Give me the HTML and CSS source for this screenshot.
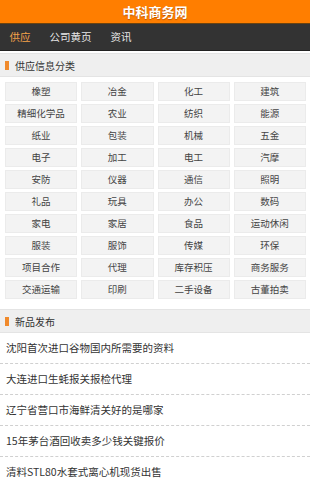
FILE: index.html
```html
<!DOCTYPE html>
<html lang="zh-CN">
<head>
<meta charset="utf-8">
<title>中科商务网</title>
<link rel="stylesheet" href="styles.css">
</head>
<body>
<header class="top">中科商务网</header>
<nav class="nav">
  <a class="nav-item active">供应</a>
  <a class="nav-item">公司黄页</a>
  <a class="nav-item">资讯</a>
</nav>
<section>
  <h2 class="sec-title"><span class="mark"></span>供应信息分类</h2>
  <div class="grid">
    <a class="cell">橡塑</a><a class="cell">冶金</a><a class="cell">化工</a><a class="cell">建筑</a>
    <a class="cell">精细化学品</a><a class="cell">农业</a><a class="cell">纺织</a><a class="cell">能源</a>
    <a class="cell">纸业</a><a class="cell">包装</a><a class="cell">机械</a><a class="cell">五金</a>
    <a class="cell">电子</a><a class="cell">加工</a><a class="cell">电工</a><a class="cell">汽摩</a>
    <a class="cell">安防</a><a class="cell">仪器</a><a class="cell">通信</a><a class="cell">照明</a>
    <a class="cell">礼品</a><a class="cell">玩具</a><a class="cell">办公</a><a class="cell">数码</a>
    <a class="cell">家电</a><a class="cell">家居</a><a class="cell">食品</a><a class="cell">运动休闲</a>
    <a class="cell">服装</a><a class="cell">服饰</a><a class="cell">传媒</a><a class="cell">环保</a>
    <a class="cell">项目合作</a><a class="cell">代理</a><a class="cell">库存积压</a><a class="cell">商务服务</a>
    <a class="cell">交通运输</a><a class="cell">印刷</a><a class="cell">二手设备</a><a class="cell">古董拍卖</a>
  </div>
</section>
<section>
  <h2 class="sec-title sec-news"><span class="mark"></span>新品发布</h2>
  <ul class="news">
    <li>沈阳首次进口谷物国内所需要的资料</li>
    <li>大连进口生蚝报关报检代理</li>
    <li>辽宁省营口市海鲜清关好的是哪家</li>
    <li>15年茅台酒回收卖多少钱关键报价</li>
    <li>清料STL80水套式离心机现货出售</li>
  </ul>
</section>
</body>
</html>
```
FILE: styles.css
```css
html, body {
  margin: 0;
  padding: 0;
  background: #fff;
  font-family: "Noto Sans CJK SC", "Noto Sans", sans-serif;
  color: #333;
}
.top {
  height: 23px;
  line-height: 23px;
  background: #ff7e00;
  color: #fff;
  text-align: center;
  font-weight: bold;
  font-size: 13px;
  text-shadow: 0 1px 1px rgba(120, 50, 0, 0.5);
  border-bottom: 1px solid #6a4310;
}
.nav {
  display: flex;
  height: 26px;
  background: #333;
  border-bottom: 1px solid #222;
}
.nav-item {
  padding: 0 9.5px;
  line-height: 26px;
  font-size: 10.5px;
  color: #e6e6e6;
}
.nav-item.active {
  color: #f5a24a;
}
.sec-title {
  display: flex;
  align-items: center;
  gap: 6px;
  margin: 2px 0 0;
  height: 22px;
  padding-left: 5px;
  background: #efefef;
  border-top: 1px solid #e4e4e4;
  border-bottom: 1px solid #e4e4e4;
  font-size: 10px;
  font-weight: normal;
  color: #333;
}
.sec-news {
  margin-top: 10px;
}
.mark {
  width: 4px;
  height: 9px;
  background: #f08a2c;
}
.grid {
  display: grid;
  grid-template-columns: repeat(4, 1fr);
  gap: 3px 4px;
  padding: 5px 4px 0 5px;
}
.cell {
  height: 17px;
  line-height: 17px;
  text-align: center;
  font-size: 9.5px;
  color: #444;
  background: #f3f3f3;
  border: 1px solid #ebebeb;
}
.news {
  list-style: none;
  margin: 0;
  padding: 0;
}
.news li {
  height: 30px;
  line-height: 30px;
  padding-left: 6px;
  font-size: 10.5px;
  color: #333;
  border-bottom: 1px dashed #d0d0d0;
  white-space: nowrap;
}
```
